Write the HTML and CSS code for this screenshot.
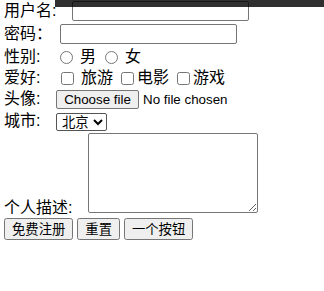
FILE: index.html
```html
<!DOCTYPE html>
<html lang="zh">
<head>
<meta charset="utf-8">
<title>注册</title>
<link rel="stylesheet" href="styles.css">
</head>
<body>
<div class="topbar"></div>
<form class="form">
  <div class="row row-user">
    <span class="lbl lbl-user">用户名:</span>
    <input class="text-input" type="text">
  </div>
  <div class="row row-pass">
    <span class="lbl lbl-pass">密码：</span>
    <input class="text-input" type="password">
  </div>
  <div class="row row-sex">
    <span class="lbl lbl-sex">性别:</span>
    <input class="choice" type="radio" name="sex"><span class="opt opt-sp">男</span>
    <input class="choice choice-gap" type="radio" name="sex"><span class="opt opt-sp">女</span>
  </div>
  <div class="row row-hobby">
    <span class="lbl lbl-hobby">爱好:</span>
    <input class="choice" type="checkbox"><span class="opt opt-sp">旅游</span>
    <input class="choice choice-gap2" type="checkbox"><span class="opt opt-tight">电影</span>
    <input class="choice choice-gap2" type="checkbox"><span class="opt opt-tight">游戏</span>
  </div>
  <div class="row row-avatar">
    <span class="lbl lbl-avatar">头像:</span>
    <label class="file-btn"><input class="file-input" type="file">Choose file</label>
    <span class="file-name">No file chosen</span>
  </div>
  <div class="row row-city">
    <span class="lbl lbl-city">城市:</span>
    <select class="city-select"><option>北京</option><option>上海</option></select>
  </div>
  <div class="row row-desc">
    <span class="lbl lbl-desc">个人描述:</span>
    <textarea class="desc"></textarea>
  </div>
  <div class="row row-btns">
    <button type="submit" class="btn">免费注册</button>
    <button type="reset" class="btn">重置</button>
    <button type="button" class="btn">一个按钮</button>
  </div>
</form>
</body>
</html>
```
FILE: styles.css
```css
html, body {
  margin: 0;
  padding: 0;
  background: #fff;
}
body {
  font-family: "Liberation Sans", "Noto Sans CJK SC", sans-serif;
  font-size: 16px;
  color: #000;
  position: relative;
}
.topbar {
  position: absolute;
  top: 0;
  left: 55px;
  right: 0;
  height: 7px;
  background: rgba(0, 0, 0, 0.81);
  z-index: 5;
}
.form {
  margin: 0;
  padding: 0 0 0 4px;
}
.row {
  display: flex;
  align-items: center;
}
.lbl {
  flex: none;
  white-space: nowrap;
  line-height: 18px;
}
.row-user { height: 22px; }
.row-pass { height: 24px; }
.row-sex { height: 21px; }
.row-hobby { height: 21px; }
.row-avatar { height: 22px; }
.row-city { height: 22px; }
.lbl-user { width: 68px; }
.lbl-pass { width: 56px; }
.lbl-sex { width: 56px; }
.lbl-hobby { width: 57px; }
.lbl-avatar { width: 52px; }
.lbl-city { width: 52px; }
.lbl-desc { width: 84px; }

.choice {
  margin: 2px 0 0 0;
  width: 13px;
  height: 13px;
  flex: none;
}
.choice-gap { margin-left: 9px; }
.choice-gap2 { margin-left: 8px; }
.opt {
  white-space: nowrap;
  line-height: 18px;
}
.opt-sp { margin-left: 7px; }
.opt-tight { margin-left: 3px; }

.text-input {
  margin: 0;
  width: 177px;
  height: 20px;
  box-sizing: border-box;
  border: 1px solid #767676;
  border-radius: 2px;
  font-family: "Liberation Sans", sans-serif;
  font-size: 13.33px;
}
.file-input {
  display: none;
}
.file-btn {
  box-sizing: border-box;
  height: 19px;
  width: 83px;
  margin-top: 1px;
  padding: 0 6px;
  display: flex;
  align-items: center;
  justify-content: center;
  background: #efefef;
  border: 1px solid #767676;
  border-radius: 2px;
  font-family: "Liberation Sans", sans-serif;
  font-size: 13.33px;
  color: #000;
}
.file-name {
  margin-left: 4px;
  margin-top: 1px;
  font-family: "Liberation Sans", sans-serif;
  font-size: 13.33px;
}
.city-select {
  margin: 2px 0 0 0;
  font-family: "Liberation Sans", "Noto Sans CJK SC", sans-serif;
  font-size: 13.33px;
  height: 18px;
  width: 51px;
  padding: 0 0 0 1px;
  border: 1px solid #555;
  border-radius: 2px;
  background: #fff;
  color: #000;
}
.row-desc {
  align-items: flex-end;
  height: 81px;
}
.row-desc .lbl { margin-bottom: -4px; }
.desc {
  margin: 0;
  width: 170px;
  height: 80px;
  box-sizing: border-box;
  border: 1px solid #767676;
  border-radius: 2px;
  resize: both;
}
.row-btns {
  margin-top: 5px;
  gap: 4px;
}
.btn {
  margin: 0;
  font-family: "Liberation Sans", "Noto Sans CJK SC", sans-serif;
  font-size: 13.33px;
  line-height: 15px;
  padding: 2px 6px;
  height: 22px;
}
```
